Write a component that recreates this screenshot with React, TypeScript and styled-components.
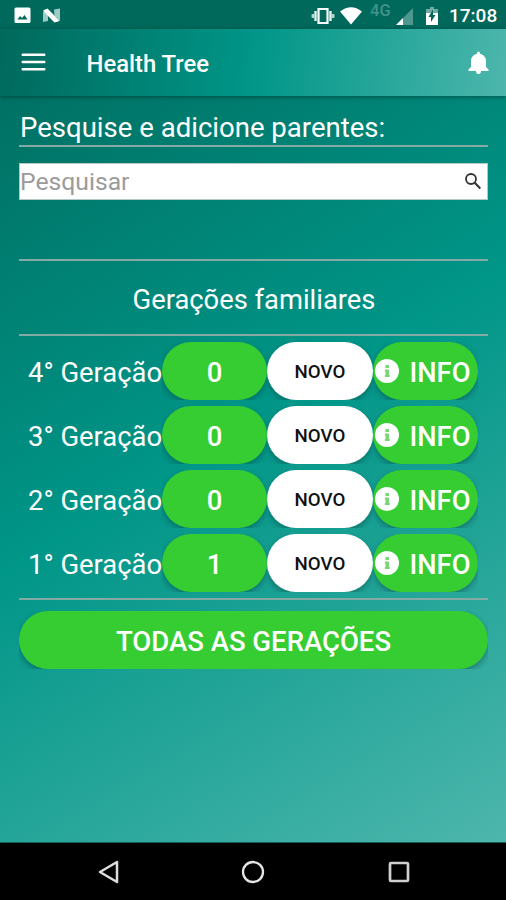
import React from 'react';
import styled, { createGlobalStyle, css } from 'styled-components';

const GlobalStyle = createGlobalStyle`
  *, *::before, *::after { box-sizing: border-box; }
  body { margin: 0; background: #000; }
  button, input { font-family: inherit; }
`;

const Screen = styled.div`
  display: flex;
  flex-direction: column;
  width: 506px;
  height: 900px;
  overflow: hidden;
  font-family: Roboto, "Liberation Sans", sans-serif;
  color: #fff;
  background: #000;
`;

const Page = styled.div`
  display: flex;
  flex-direction: column;
  height: 843px;
  flex: none;
  background: linear-gradient(149deg, #00695c 0%, #009688 50%, #4db6ac 100%);
  border-bottom: 1px solid #1b5d56;
`;

const StatusBar = styled.header`
  display: flex;
  align-items: center;
  justify-content: space-between;
  flex: none;
  height: 29px;
  padding: 2px 8px 0 14px;
  background: #00695c;
`;

const StatusGroup = styled.div`
  display: flex;
  align-items: center;
`;

const Glyph = styled.svg<{ $gap?: number }>`
  display: block;
  flex: none;
  margin-left: ${({ $gap = 0 }) => $gap}px;
`;

const Network = styled.span`
  width: 21px;
  margin: -9px 0 0 8px;
  font-size: 16.5px;
  line-height: 16px;
  color: #40948a;
  font-weight: 500;
`;

const Clock = styled.span`
  width: 49px;
  margin-left: 11px;
  font-size: 19px;
  line-height: 22px;
  font-weight: 500;
  white-space: nowrap;
`;

const AppBar = styled.nav`
  display: flex;
  align-items: center;
  flex: none;
  height: 67px;
  padding: 0 17px 0 21px;
  background: linear-gradient(97.5deg, #00695c 0%, #009688 50%, #4db6ac 100%);
  box-shadow: 0 1px 4px rgba(0, 30, 26, 0.5);
`;

const IconButton = styled.button<{ $lift?: number }>`
  display: flex;
  padding: 0;
  margin-bottom: ${({ $lift = 0 }) => $lift}px;
  border: 0;
  background: none;
  color: inherit;
`;

const Title = styled.h1`
  flex: 1;
  margin: 2px 0 0 40.5px;
  font-size: 23.8px;
  line-height: 30px;
  font-weight: 500;
`;

const Content = styled.main`
  display: flex;
  flex-direction: column;
  padding: 13px 18px 0 19px;
`;

const Prompt = styled.h2`
  height: 36px;
  margin: 0;
  padding-left: 1px;
  font-size: 27.55px;
  line-height: 37px;
  font-weight: 400;
  white-space: nowrap;
`;

const Divider = styled.hr`
  width: 100%;
  height: 2px;
  margin: 0;
  border: 0;
  background: #84aaa5;
`;

const SearchField = styled.label`
  display: flex;
  align-items: center;
  height: 37px;
  margin: 16px 0 59px;
  padding-right: 6px;
  background: #fff;
  border: 1px solid #b5c8c5;
  color: #333;
`;

const SearchInput = styled.input`
  flex: 1;
  min-width: 0;
  height: 35px;
  padding: 0 0 1px;
  border: 0;
  outline: 0;
  background: none;
  font-size: 24.7px;
  &::placeholder { color: #9b9b9b; opacity: 1; }
`;

const SectionTitle = styled.h2`
  height: 73px;
  margin: 0;
  padding-left: 1px;
  font-size: 27.35px;
  line-height: 79px;
  font-weight: 400;
  text-align: center;
`;

const Generations = styled.section`
  display: grid;
  gap: 6px;
  padding: 6px 9px 6px;
`;

const GenerationRow = styled.div`
  display: grid;
  grid-template-columns: 134px 105px 106px 105px;
  height: 58px;
`;

const GenerationName = styled.span`
  font-size: 27.4px;
  line-height: 63px;
  white-space: nowrap;
`;

const Shade = styled.div`
  display: flex;
  height: 58px;
  overflow: hidden;
`;

const Pill = styled.button<{ $tone?: 'green' | 'white' }>`
  display: flex;
  align-items: center;
  justify-content: center;
  width: 100%;
  height: 58px;
  padding: 0;
  border: 0;
  border-radius: 29px;
  box-shadow: 0 3px 6px rgba(0, 50, 50, 0.4);
  font-size: 27.5px;
  line-height: 58px;
  font-weight: 500;
  white-space: nowrap;
  ${({ $tone = 'green' }) =>
    $tone === 'green'
      ? css`
          background: #35cd32;
          color: #fff;
        `
      : css`
          background: #fff;
          color: #111;
          font-size: 18.7px;
        `}
`;

const PillText = styled.span<{ $left?: number; $drop?: number }>`
  padding-top: ${({ $drop = 3 }) => $drop}px;
  margin-left: ${({ $left = 0 }) => $left}px;
`;

const InfoPill = styled(Pill)`
  justify-content: flex-start;
  padding-left: 2px;
  font-size: 27.3px;
`;

const AllShade = styled(Shade)`
  margin-top: 11px;
`;

const NavigationBar = styled.footer`
  display: flex;
  align-items: center;
  justify-content: space-between;
  flex: 1;
  padding: 1px 95px 0 96px;
`;

const generations = [
  { name: '4° Geração', count: 0 },
  { name: '3° Geração', count: 0 },
  { name: '2° Geração', count: 0 },
  { name: '1° Geração', count: 1 },
];

function StatusIcons() {
  return (
    <StatusBar>
      <StatusGroup>
        <Glyph width="17" height="17" viewBox="0 0 17 17">
          <path fill="#fff" fillRule="evenodd" d="M2 .5h13q1.5 0 1.5 1.5v12.500q0 1.500-1.500 1.500H2Q.5 16 .5 14.500V2Q.5.5 2 .5ZM3.500 12.500h10L10.500 8 8 11 6 9Z" />
        </Glyph>
        <Glyph $gap={11} width="20" height="16" viewBox="0 0 20 16">
          <path fill="#9dcbc5" d="M1 3.500 6 5v8l-5 1ZM12 1.500 18 .5v12l-5 1.500Z" />
          <path fill="#fff" d="M1 2.500 5.500.5 11 6l4 5 2.500 2-5 1.500L7 9Z" />
        </Glyph>
      </StatusGroup>
      <StatusGroup>
        <Glyph width="24" height="18" viewBox="0 0 24 18">
          <path fill="none" stroke="#fff" strokeWidth="2.200" d="M7.500 2h9v14h-9Z" />
          <path stroke="#e5f3f1" strokeWidth="2.400" d="M4.500 4v10M19.500 4v10" />
          <path stroke="#b5d8d3" strokeWidth="2.400" d="M1.800 7v4M22.200 7v4" />
        </Glyph>
        <Glyph $gap={5} width="22" height="18" viewBox="0 0 22 18">
          <path fill="#fff" d="M0 4.500Q11-4 22 4.500L11 17.500Z" />
        </Glyph>
        <Network>4G</Network>
        <Glyph $gap={5} width="18" height="18" viewBox="0 0 18 18">
          <path fill="#4d988f" d="M0 18 17 1v17Z" />
          <path fill="#fff" d="M0 18 7 11v7Z" />
        </Glyph>
        <Glyph $gap={12} width="12" height="18" viewBox="0 0 12 18">
          <path fill="#70aaa3" d="M4 0h4v2h4v5H0V2h4Z" />
          <path fill="#fff" d="M0 6h12v12H0Z" />
          <path fill="#00695c" d="M7 2.500 2.500 10H5v5l4.500-7H7Z" />
        </Glyph>
        <Clock>17:08</Clock>
      </StatusGroup>
    </StatusBar>
  );
}

function InfoIcon() {
  return (
    <Glyph width="24" height="24" viewBox="0 0 24 24">
      <circle cx="12" cy="12" r="12" fill="#fff" />
      <path fill="#7bd579" d="M10.500 6h3.500v3h-3.500ZM9.800 10.500H14V16h.7v2H9.800v-2h.7v-3.500h-.7Z" />
    </Glyph>
  );
}

export default function App() {
  return (
    <Screen>
      <GlobalStyle />
      <Page>
        <StatusIcons />
        <AppBar>
          <IconButton aria-label="Menu" $lift={2}>
            <Glyph width="25" height="18" viewBox="0 0 25 18">
              <path stroke="#fff" strokeWidth="2.600" strokeLinecap="round" d="M1.800 1.800h21.400M1.800 9h21.400M1.800 16.200h21.400" />
            </Glyph>
          </IconButton>
          <Title>Health Tree</Title>
          <IconButton aria-label="Notificações">
            <Glyph width="21" height="24" viewBox="0 0 21 24">
              <path fill="#fff" d="M9 2q0-1.500 1.500-1.500T12 2v.8c3.800.8 6 4 6 7.200v6l2.500 2.500v1.500H.5v-1.500L3 16v-6C3 6.800 5.200 3.600 9 2.800ZM8 20h5q0 3-2.500 3T8 20Z" />
            </Glyph>
          </IconButton>
        </AppBar>
        <Content>
          <Prompt>Pesquise e adicione parentes:</Prompt>
          <Divider />
          <SearchField>
            <SearchInput placeholder="Pesquisar" />
            <Glyph width="16" height="17" viewBox="0 0 16 17">
              <circle cx="6" cy="6" r="5" fill="none" stroke="currentColor" strokeWidth="1.800" />
              <path stroke="currentColor" strokeWidth="2.100" d="m9.500 9.500 5.800 6" />
            </Glyph>
          </SearchField>
          <Divider />
          <SectionTitle>Gerações familiares</SectionTitle>
          <Divider />
          <Generations>
            {generations.map(({ name, count }) => (
              <GenerationRow key={name}>
                <GenerationName>{name}</GenerationName>
                <Shade><Pill><PillText>{count}</PillText></Pill></Shade>
                <Shade><Pill $tone="white"><PillText $drop={1}>NOVO</PillText></Pill></Shade>
                <Shade>
                  <InfoPill>
                    <InfoIcon />
                    <PillText $left={10.5}>INFO</PillText>
                  </InfoPill>
                </Shade>
              </GenerationRow>
            ))}
          </Generations>
          <Divider />
          <AllShade><Pill><PillText>TODAS AS GERAÇÕES</PillText></Pill></AllShade>
        </Content>
      </Page>
      <NavigationBar>
        <IconButton aria-label="Voltar">
          <Glyph width="23" height="24" viewBox="0 0 23 24">
            <path fill="none" stroke="#ddd" strokeWidth="2.500" strokeLinejoin="round" d="M21 2v20L4 12Z" />
          </Glyph>
        </IconButton>
        <IconButton aria-label="Início">
          <Glyph width="24" height="24" viewBox="0 0 24 24">
            <circle cx="12" cy="12" r="10" fill="none" stroke="#e6e6e6" strokeWidth="2.300" />
          </Glyph>
        </IconButton>
        <IconButton aria-label="Recentes">
          <Glyph width="24" height="24" viewBox="0 0 24 24">
            <rect x="3" y="3" width="18" height="18" rx="1" fill="none" stroke="#d0d0d0" strokeWidth="2.700" />
          </Glyph>
        </IconButton>
      </NavigationBar>
    </Screen>
  );
}
